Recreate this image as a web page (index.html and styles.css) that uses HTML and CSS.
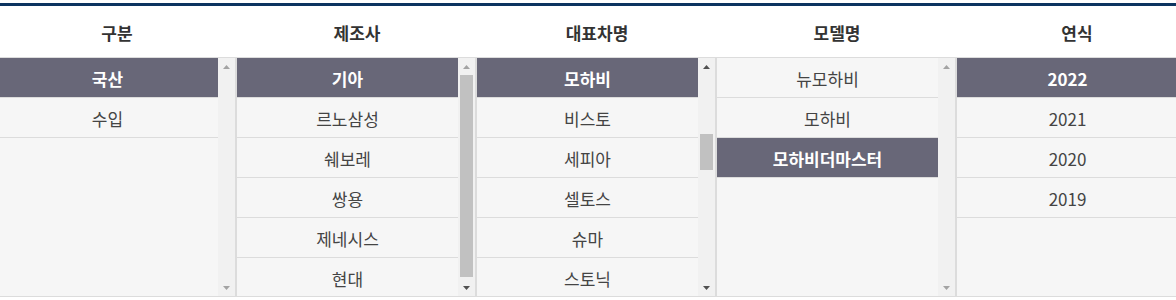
FILE: index.html
```html
<!DOCTYPE html>
<html lang="ko">
<head>
    <meta charset="UTF-8">
    <meta name="viewport" content="width=device-width, initial-scale=1.0">
    <title>차량 선택</title>
    <link rel="stylesheet" href="styles.css">
</head>
<body>
    <div class="picker">
        <!-- 구분 -->
        <div class="col">
            <div class="col-head">구분</div>
            <div class="col-body">
                <ul class="list">
                    <li class="item on">국산</li>
                    <li class="item">수입</li>
                </ul>
                <div class="sb">
                    <div class="sb-btn"><svg class="arr off" viewBox="0 0 7 4"><polygon points="0,4 7,4 3.5,0"/></svg></div>
                    <div class="sb-track"></div>
                    <div class="sb-btn"><svg class="arr off" viewBox="0 0 7 4"><polygon points="0,0 7,0 3.5,4"/></svg></div>
                </div>
            </div>
        </div>

        <!-- 제조사 -->
        <div class="col">
            <div class="col-head">제조사</div>
            <div class="col-body">
                <ul class="list">
                    <li class="item on">기아</li>
                    <li class="item">르노삼성</li>
                    <li class="item">쉐보레</li>
                    <li class="item">쌍용</li>
                    <li class="item">제네시스</li>
                    <li class="item">현대</li>
                </ul>
                <div class="sb">
                    <div class="sb-btn"><svg class="arr off" viewBox="0 0 7 4"><polygon points="0,4 7,4 3.5,0"/></svg></div>
                    <div class="sb-track"><div class="sb-thumb" style="margin-top: 0; height: 202px;"></div></div>
                    <div class="sb-btn"><svg class="arr" viewBox="0 0 7 4"><polygon points="0,0 7,0 3.5,4"/></svg></div>
                </div>
            </div>
        </div>

        <!-- 대표차명 -->
        <div class="col">
            <div class="col-head">대표차명</div>
            <div class="col-body">
                <ul class="list">
                    <li class="item on">모하비</li>
                    <li class="item">비스토</li>
                    <li class="item">세피아</li>
                    <li class="item">셀토스</li>
                    <li class="item">슈마</li>
                    <li class="item">스토닉</li>
                </ul>
                <div class="sb">
                    <div class="sb-btn"><svg class="arr" viewBox="0 0 7 4"><polygon points="0,4 7,4 3.5,0"/></svg></div>
                    <div class="sb-track"><div class="sb-thumb" style="margin-top: 59px; height: 36px;"></div></div>
                    <div class="sb-btn"><svg class="arr" viewBox="0 0 7 4"><polygon points="0,0 7,0 3.5,4"/></svg></div>
                </div>
            </div>
        </div>

        <!-- 모델명 -->
        <div class="col">
            <div class="col-head">모델명</div>
            <div class="col-body">
                <ul class="list">
                    <li class="item">뉴모하비</li>
                    <li class="item">모하비</li>
                    <li class="item on">모하비더마스터</li>
                </ul>
                <div class="sb">
                    <div class="sb-btn"><svg class="arr off" viewBox="0 0 7 4"><polygon points="0,4 7,4 3.5,0"/></svg></div>
                    <div class="sb-track"></div>
                    <div class="sb-btn"><svg class="arr off" viewBox="0 0 7 4"><polygon points="0,0 7,0 3.5,4"/></svg></div>
                </div>
            </div>
        </div>

        <!-- 연식 -->
        <div class="col">
            <div class="col-head">연식</div>
            <div class="col-body">
                <ul class="list">
                    <li class="item on">2022</li>
                    <li class="item">2021</li>
                    <li class="item">2020</li>
                    <li class="item">2019</li>
                </ul>
                <div class="sb">
                    <div class="sb-btn"><svg class="arr off" viewBox="0 0 7 4"><polygon points="0,4 7,4 3.5,0"/></svg></div>
                    <div class="sb-track"></div>
                    <div class="sb-btn"><svg class="arr off" viewBox="0 0 7 4"><polygon points="0,0 7,0 3.5,4"/></svg></div>
                </div>
            </div>
        </div>
    </div>
</body>
</html>
```

FILE: styles.css
```css
body {
    margin: 0;
    padding-top: 3px;
    overflow: hidden;
    background: #fff;
    font-family: "Noto Sans CJK KR", "Noto Sans", sans-serif;
    font-size: 17px;
    color: #333;
}
.picker {
    display: flex;
    width: 1200px;
    margin-left: -3px;
    border-top: 3px solid #0c3460;
}
.col {
    width: 240px;
    display: flex;
    flex-direction: column;
}
.col-head {
    height: 51px;
    padding-top: 2px;
    box-sizing: border-box;
    line-height: 49px;
    text-align: center;
    font-weight: bold;
    color: #333;
}
.col-body {
    display: flex;
    height: 238px;
    border-top: 1px solid #dcdcdc;
    border-bottom: 1px solid #dcdcdc;
}
.list {
    flex: 1;
    margin: 0;
    padding: 0;
    list-style: none;
    background: #f6f6f6;
    overflow: hidden;
}
.item {
    height: 40px;
    padding-top: 2px;
    box-sizing: border-box;
    line-height: 37px;
    border-bottom: 1px solid #dcdcdc;
    text-align: center;
    color: #444;
}
.item.on {
    background: #686778;
    color: #fff;
    font-weight: bold;
}
.sb {
    width: 17px;
    display: flex;
    flex-direction: column;
    background: #f1f1f1;
    border-right: 2px solid #dcdcdc;
}
.sb-btn {
    height: 17px;
    display: flex;
    align-items: center;
    justify-content: center;
}
.sb-track {
    flex: 1;
}
.sb-thumb {
    margin: 0 2px;
    background: #c1c1c1;
}
.arr {
    width: 7px;
    height: 4px;
    display: block;
    fill: #505050;
}
.arr.off {
    fill: #a3a3a3;
}
```
